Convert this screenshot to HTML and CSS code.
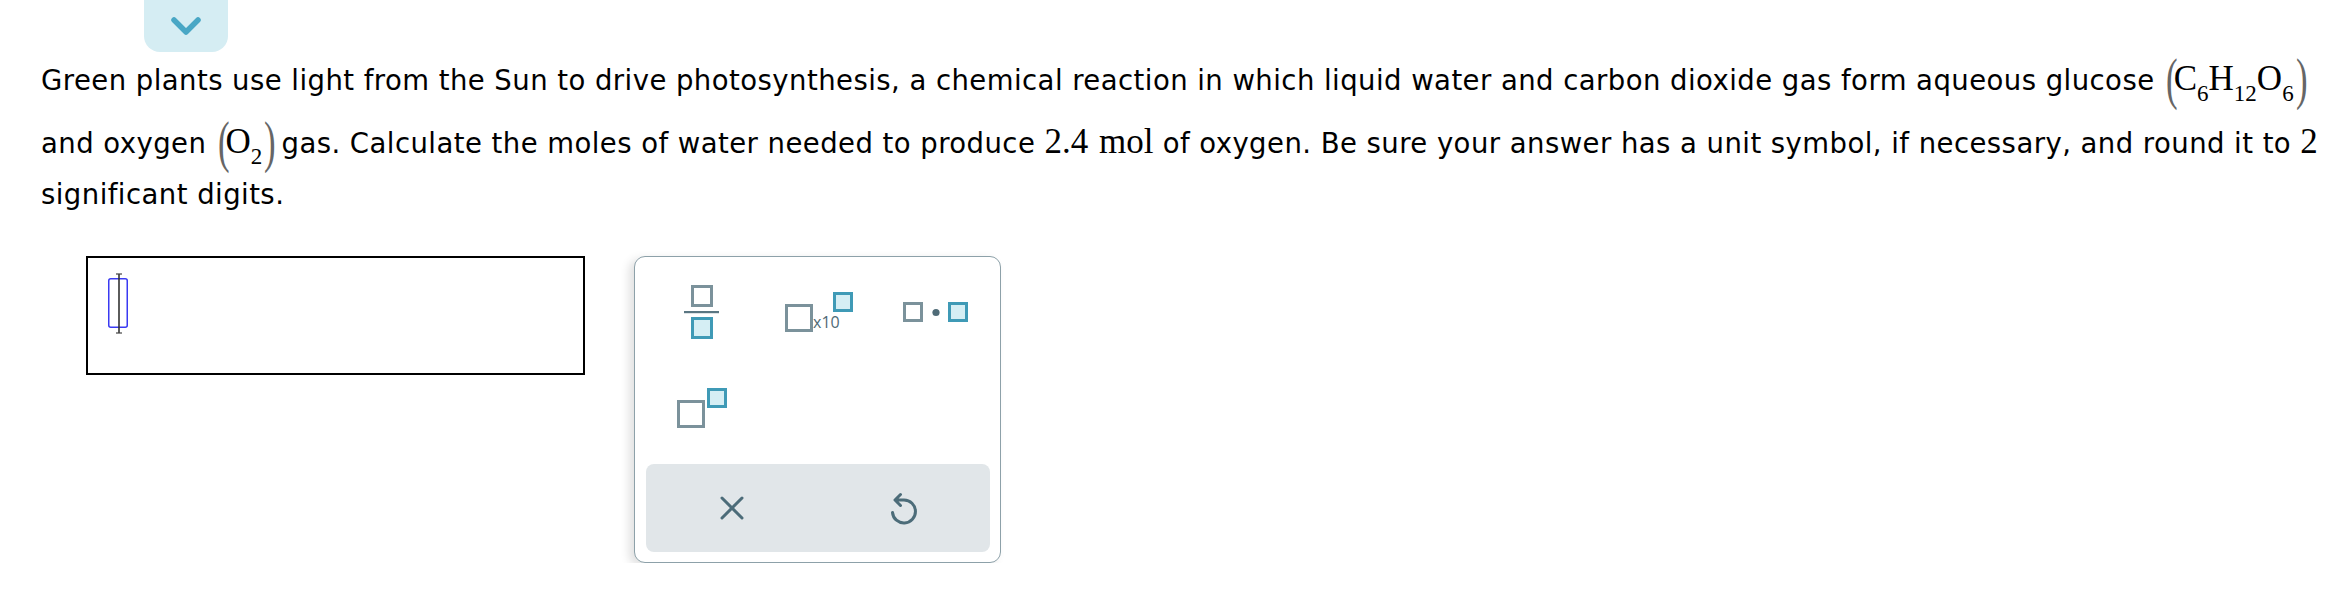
FILE: index.html
```html
<!DOCTYPE html>
<html lang="en">
<head>
<meta charset="utf-8">
<title>Question</title>
<link rel="stylesheet" href="styles.css">
</head>
<body>
<div class="page">
  <div class="toggle">
    <svg width="32" height="20" viewBox="0 0 32 20"><polyline points="4,4 16,16 28,4" fill="none" stroke="#49a7c5" stroke-width="5.5" stroke-linecap="round" stroke-linejoin="round"/></svg>
  </div>
  <p class="question">Green plants use light from the Sun to drive photosynthesis, a chemical reaction in which liquid water and carbon dioxide gas form aqueous glucose <span class="math deep"><span class="paren">(</span>C<sub>6</sub>H<sub>12</sub>O<sub>6</sub><span class="paren">)</span></span> and oxygen <span class="math"><span class="paren">(</span>O<sub>2</sub><span class="paren">)</span></span> gas. Calculate the moles of water needed to produce <span class="math qty">2.4 mol</span> of oxygen. Be sure your answer has a unit symbol, if necessary, and round it to <span class="math">2</span> significant digits.</p>
  <div class="answer-row">
    <div class="answer-box">
      <svg class="caret" width="24" height="62" viewBox="0 0 24 62">
        <rect x="2.75" y="6.75" width="18.5" height="48.5" rx="2" fill="none" stroke="#3a3af2" stroke-width="1.5"/>
        <line x1="13" y1="2" x2="13" y2="61" stroke="#333" stroke-width="1.6"/>
        <line x1="10" y1="2" x2="16" y2="2" stroke="#444" stroke-width="1.2"/>
        <line x1="10" y1="61" x2="16" y2="61" stroke="#444" stroke-width="1.2"/>
      </svg>
    </div>
    <div class="palette">
      <div class="keys">
        <div class="key">
          <svg width="36" height="54" viewBox="0 0 36 54">
            <rect x="8.5" y="1.5" width="19" height="19" fill="#fff" stroke="#7b929b" stroke-width="3"/>
            <rect x="0" y="26" width="35" height="2.2" fill="#5a7682"/>
            <rect x="8.5" y="33.5" width="19" height="19" fill="#d5eef4" stroke="#3f9ab6" stroke-width="3"/>
          </svg>
        </div>
        <div class="key">
          <svg width="68" height="40" viewBox="0 0 68 40">
            <rect x="1.5" y="13.5" width="25" height="25" fill="#fff" stroke="#7b929b" stroke-width="3"/>
            <text x="28" y="36" class="x10">x10</text>
            <rect x="49.5" y="1.5" width="17" height="17" fill="#d5eef4" stroke="#3f9ab6" stroke-width="3"/>
          </svg>
        </div>
        <div class="key">
          <svg width="66" height="22" viewBox="0 0 66 22">
            <rect x="1.5" y="2.5" width="17" height="17" fill="#fff" stroke="#7b929b" stroke-width="3"/>
            <circle cx="33" cy="11.5" r="3.6" fill="#4f6b77"/>
            <rect x="46.5" y="2.5" width="17" height="17" fill="#d5eef4" stroke="#3f9ab6" stroke-width="3"/>
          </svg>
        </div>
        <div class="key">
          <svg width="50" height="40" viewBox="0 0 50 40">
            <rect x="1.5" y="13.5" width="25" height="25" fill="#fff" stroke="#7b929b" stroke-width="3"/>
            <rect x="31.5" y="1.5" width="17" height="17" fill="#d5eef4" stroke="#3f9ab6" stroke-width="3"/>
          </svg>
        </div>
      </div>
      <div class="actions">
        <div class="action">
          <svg width="24" height="24" viewBox="0 0 24 24"><path d="M2 2 L22 22 M22 2 L2 22" stroke="#4c6c79" stroke-width="3" stroke-linecap="round" fill="none"/></svg>
        </div>
        <div class="action">
          <svg width="32" height="34" viewBox="0 0 32 34"><path d="M4.5 21.5 A11.5 11.5 0 1 0 16 9 L8 9 M12.5 3.5 L7 9 L12.5 14.5" stroke="#4c6c79" stroke-width="3" stroke-linecap="round" stroke-linejoin="round" fill="none"/></svg>
        </div>
      </div>
    </div>
  </div>
</div>
</body>
</html>
```

FILE: styles.css
```css
* { box-sizing: border-box; }
html, body { margin: 0; padding: 0; background: #fff; }
body {
  font-family: "DejaVu Sans", Verdana, sans-serif;
  color: #000;
}
.page {
  width: 2348px;
  padding: 0 0 0 41px;
}
.toggle {
  margin-left: 103px;
  width: 84px;
  height: 52px;
  background: #d5edf3;
  border-radius: 0 0 16px 16px;
  display: flex;
  align-items: center;
  justify-content: center;
}
.toggle svg { display: block; }
.question {
  margin: 3px 0 0;
  font-size: 27.5px;
  letter-spacing: 0.45px;
  line-height: 51px;
}
.math {
  display: inline-block;
  font-family: "Liberation Serif", "Times New Roman", serif;
  font-size: 35px;
  letter-spacing: 0;
  line-height: 40px;
}
.math.deep { padding-bottom: 19px; }
.math.qty { word-spacing: 2px; }
.math sub {
  font-size: 23px;
  line-height: 0;
  vertical-align: -11px;
}
.paren {
  display: inline-block;
  width: 10px;
  text-align: center;
  font-size: 58px;
  line-height: 30px;
  vertical-align: -8px;
  transform: scaleX(0.6);
  color: #666;
}
.answer-row {
  display: flex;
  align-items: flex-start;
  gap: 49px;
  margin: 36px 0 0 45px;
}
.answer-box {
  width: 499px;
  height: 119px;
  border: 2px solid #000;
  padding: 14px 0 0 18px;
}
.caret { display: block; }
.palette {
  width: 367px;
  height: 307px;
  border: 1px solid #8da1a9;
  border-radius: 11px;
  padding: 7px 6px 10px 8px;
  background: #fff;
  box-shadow: -5px 3px 10px rgba(0, 0, 0, 0.12);
}
.keys {
  display: grid;
  grid-template-columns: repeat(3, 117px);
  grid-auto-rows: 96px;
}
.key {
  display: flex;
  align-items: center;
  justify-content: center;
}
.key svg { display: block; }
.x10 {
  font-family: "Open Sans", "DejaVu Sans", sans-serif;
  font-size: 16px;
  fill: #4e6a76;
}
.actions {
  margin: 8px 4px 0 3px;
  height: 88px;
  background: #e1e6e9;
  border-radius: 8px;
  display: grid;
  grid-template-columns: 1fr 1fr;
}
.action {
  display: flex;
  align-items: center;
  justify-content: center;
}
.action svg { display: block; }
```
